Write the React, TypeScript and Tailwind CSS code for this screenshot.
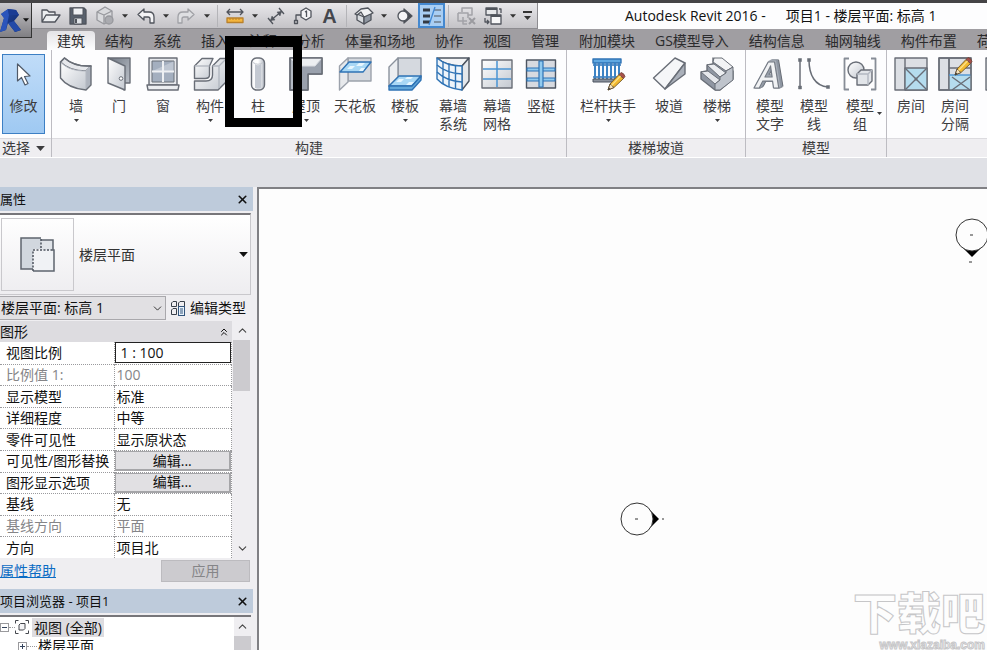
import { useState } from "react";
import type { ReactNode } from "react";
import { ChevronDown, ChevronUp, ChevronsUp, X } from "lucide-react";
import clsx from "clsx";

const EDGE = "#696e77";
const BLUE = "#2f73b5";

function Caret({ className }: { className?: string }) {
  return (
    <svg width="7" height="4" viewBox="0 0 7 4" className={className} aria-hidden="true">
      <path d="M0 0H7L3.5 4Z" fill="currentColor" />
    </svg>
  );
}

function Big({ children }: { children: ReactNode }) {
  return (
    <svg
      width="34"
      height="34"
      viewBox="0 0 34 34"
      fill="none"
      stroke={EDGE}
      strokeWidth="1.4"
      strokeLinejoin="round"
      className="shrink-0 overflow-visible"
      aria-hidden="true"
    >
      {children}
    </svg>
  );
}

function Small({ children }: { children: ReactNode }) {
  return (
    <svg
      width="20"
      height="20"
      viewBox="0 0 20 20"
      fill="none"
      stroke="#50545c"
      strokeWidth="1.3"
      strokeLinejoin="round"
      aria-hidden="true"
    >
      {children}
    </svg>
  );
}

function Gradients() {
  return (
    <svg width="0" height="0" className="absolute" aria-hidden="true">
      <defs>
        <linearGradient id="steel" x1="0" y1="0" x2="1" y2="1">
          <stop offset="0" stopColor="#ffffff" />
          <stop offset="1" stopColor="#c3c8d0" />
        </linearGradient>
        <linearGradient id="dark" x1="0" y1="0" x2="1" y2="1">
          <stop offset="0" stopColor="#6f7782" />
          <stop offset="1" stopColor="#c3c8d0" />
        </linearGradient>
        <linearGradient id="tube" x1="0" y1="0" x2="1" y2="0">
          <stop offset="0" stopColor="#f8f8fa" />
          <stop offset="0.5" stopColor="#ffffff" />
          <stop offset="1" stopColor="#b4bac4" />
        </linearGradient>
        <linearGradient id="logo" x1="0" y1="0" x2="1" y2="1">
          <stop offset="0" stopColor="#2149a8" />
          <stop offset="1" stopColor="#0d2460" />
        </linearGradient>
      </defs>
    </svg>
  );
}

function Pencil() {
  return (
    <>
      <path d="M17 33L19 27L28 17.500L32.500 21.500L23 30.500Z" fill="#f2b92f" stroke="#7b6030" strokeWidth="1" />
      <path d="M17 33L19 27L23 30.500Z" fill="#f6e3bd" stroke="#6a5840" strokeWidth="1" />
      <path d="M17 33L17.800 30.500L19.500 32Z" fill="#333" stroke="none" />
      <path d="M28 17.500L30 15.500Q33 16 34 19.500L32.500 21.500Z" fill="#a8504a" stroke="#6f4238" strokeWidth="0.800" />
      <path d="M20.500 28.500L29.500 19" stroke="#fbe08a" strokeWidth="1.200" />
    </>
  );
}

function RoomShape() {
  return (
    <>
      <rect x="1" y="1" width="32" height="32" fill="#dcdfe4" />
      <path d="M11 1V33" />
    </>
  );
}

const icons: Record<string, ReactNode> = {
  wall: (
    <Big>
      <path d="M1.500 5L5.500 1C12 7 22 9.500 32 9L27 14C17 14 8 12 1.500 5Z" fill="#e6e8ec" />
      <path d="M1.500 5C8 12 17 14 27 14V33C16 32 7 28.500 1.500 21Z" fill="url(#steel)" stroke="none" />
      <path d="M27 14L32 9V28L27 33Z" fill="#aeb4be" stroke="none" />
      <path d="M1.500 5C8 12 17 14 27 14M27 14V33M27 14L32 9" stroke="#b3b8c1" strokeWidth="1" />
      <path d="M1.500 5L5.500 1C12 7 22 9.500 32 9V28L27 33C16 32 7 28.500 1.500 21Z" />
    </Big>
  ),
  door: (
    <Big>
      <path d="M6 1H28V26H22V33Z" fill="url(#dark)" />
      <path d="M6 1L23 9V33L6 26Z" fill="url(#steel)" />
      <circle cx="19" cy="21.500" r="1.800" fill="#fff" strokeWidth="1" />
    </Big>
  ),
  window: (
    <Big>
      <rect x="3" y="1" width="28" height="27" fill="#e6e8ec" />
      <rect x="6" y="4" width="22" height="21" fill="#a4afbf" strokeWidth="1" />
      <path d="M6.500 14L27.500 4.500V14Z" fill="#bec6d2" stroke="none" />
      <path d="M17 4V25M6 14.500H28" stroke="#eef0f3" strokeWidth="2" />
      <path d="M1 28H33L32 33H2Z" fill="#eceef1" />
    </Big>
  ),
  component: (
    <Big>
      <path d="M1.500 9L9 1.500H20L16.500 9V18Q16.500 21.500 12 21.500H1.500Z" fill="url(#steel)" />
      <path d="M1.500 9H16.500" stroke="#b3b8c1" />
      <path d="M1.500 24H13Q19.500 24 19.500 18V9L27 1.500H33V25L25 33H1.500Z" fill="url(#steel)" />
      <path d="M19.500 9H26L33 2M26 9V31" stroke="#b3b8c1" />
    </Big>
  ),
  column: (
    <Big>
      <rect x="10.500" y="1" width="13" height="32" rx="5" fill="url(#tube)" />
      <path d="M14 7Q17 9.500 20 7V31Q17 32.500 14 31Z" fill="#c4c9d2" stroke="none" />
      <path d="M12 5.500Q17 9 22 5.500" stroke="#c2c6cd" strokeWidth="1" />
    </Big>
  ),
  roof: (
    <Big>
      <path d="M1 1H33V17H19V33H1Z" fill="#b4bac4" />
      <path d="M1 1L10 9H26L33 1Z" fill="#eceef1" stroke="none" />
      <path d="M10 9V33H18.500V16.500H32.500V1.500L26 9Z" fill="#9aa1ad" stroke="none" />
      <path d="M1 1L10 9H26L33 1M10 9V33" stroke="#d9dce1" strokeWidth="1" />
      <path d="M1 1H33V17H19V33H1Z" />
    </Big>
  ),
  ceiling: (
    <Big>
      <path d="M10 1H33V24H10Z" fill="#d5d9df" stroke="#9ca2ac" />
      <path d="M1.500 9L10 1V25L1.500 33Z" fill="#e7e9ec" stroke="#9ca2ac" />
      <path d="M2 15L11 5H33L25 15Z" fill="#a9d8f5" stroke={BLUE} />
      <path d="M9 12L12 9H17L14 12ZM18 9L21 6H27L24 9ZM21 14L23 11H27L25 14Z" fill="#e7f6fe" stroke="none" />
    </Big>
  ),
  floor: (
    <Big>
      <path d="M10 1H33V21H10Z" fill="#d5d9df" stroke="#8b929d" />
      <path d="M1 10L10 1V20L1 29Z" fill="#eceef1" stroke="#8b929d" />
      <path d="M1 29L11 19H33L24 29Z" fill="#a9d8f5" stroke={BLUE} />
      <path d="M1 29H24L33 19V23L24 33H1Z" fill="#62a8da" stroke={BLUE} />
      <path d="M8 25L11 22H16L13 25ZM17 22L19 20H25L23 22ZM18 28L21 25H26L23 28Z" fill="#e7f6fe" stroke="none" />
    </Big>
  ),
  curtainSystem: (
    <Big>
      <path d="M1 1H33L26 9Q10 9 1 1Z" fill="#f3f4f6" stroke="#4d5561" />
      <path d="M26 9L33 1V24L26 33Z" fill="#e4e7eb" stroke="#4d5561" />
      <path d="M1 1Q10 9 26 9V33Q9 31 1 22Z" fill="#edf4fa" stroke={BLUE} />
      <path d="M1 8Q10 16 26 17M1 15Q10 24 26 25M7 5V27M13 7.500V30M19.500 8.500V32" stroke={BLUE} />
    </Big>
  ),
  curtainGrid: (
    <Big>
      <rect x="2" y="3" width="30" height="28" fill="url(#steel)" />
      <path d="M17 4V30M3 12H31M3 22H31" stroke="#4a94d3" strokeWidth="1.500" />
    </Big>
  ),
  mullion: (
    <Big>
      <rect x="2.500" y="3" width="29" height="28" fill="#d7dae0" stroke="#4d5561" />
      <path d="M3 11H31V14H3ZM3 21H31V24H3Z" fill="#91caef" stroke={BLUE} strokeWidth="1.200" />
      <path d="M15 4H19V30H15Z" fill="#91caef" stroke={BLUE} strokeWidth="1.200" />
    </Big>
  ),
  railing: (
    <Big>
      <path d="M2 2H30V6H2Z" fill="#60a9e2" stroke={BLUE} />
      <path d="M2 8H30M2 20H30" stroke={BLUE} strokeWidth="1.500" />
      <path d="M4 6V22M8 6V22M12 6V22M16 6V22M20 6V22M24 6V22M28 6V22" stroke="#3d83c4" strokeWidth="2" />
      <path d="M2 22H24V25H2Z" fill="#89909b" stroke="#4d5561" strokeWidth="1" />
      <Pencil />
    </Big>
  ),
  ramp: (
    <Big>
      <path d="M1.500 21L23 1L33 6L13 32Z" fill="#f5f6f8" />
      <path d="M33 6V17L13 32Z" fill="#aab0ba" />
    </Big>
  ),
  stairs: (
    <Big>
      <path d="M13 1L33 14V22L20 33H15L1 22V15L7 14V8L13 7Z" fill="#9097a3" />
      <path d="M14 1H22L33 10L26 14L13 5Z" fill="#f2f3f5" strokeWidth="1" />
      <path d="M7 8L14 7L26 16L20 20Z" fill="#eceef1" strokeWidth="1" />
      <path d="M1 15L8 14L20 23L15 27Z" fill="#e6e8ec" strokeWidth="1" />
      <path d="M33 10V23L20 33H15V27L20 23V20L26 16V14Z" fill="#bfc4cc" strokeWidth="1" />
    </Big>
  ),
  modelText: (
    <Big>
      <text
        x="15"
        y="31"
        fill="#f1f2f4"
        stroke="#757b85"
        strokeWidth="1.200"
        fontFamily="Liberation Sans, sans-serif"
        fontStyle="italic"
        fontWeight="700"
        fontSize="37"
        textAnchor="middle"
        className="[filter:drop-shadow(1px_-1px_0_#aab0ba)_drop-shadow(2px_-1px_0_#8e96a2)_drop-shadow(1px_0_0_#696e77)]"
      >
        A
      </text>
    </Big>
  ),
  modelLine: (
    <Big>
      <path d="M3 3V31M12 3C12 18 18 29 31 30" strokeWidth="1.500" />
      <path d="M1.500 1.500H4.500V4.500H1.500ZM1.500 29H4.500V32H1.500ZM10.500 1.500H13.500V4.500H10.500ZM29.500 28.500H32.500V31.500H29.500Z" fill={EDGE} strokeWidth="0.500" />
    </Big>
  ),
  modelGroup: (
    <Big>
      <path d="M6 1.500H1.500V32.500H6M28 1.500H32.500V32.500H28" stroke="#878d97" strokeWidth="1.800" />
      <circle cx="13" cy="13" r="8" fill="url(#steel)" />
      <path d="M14 17L18 13H29V24L25 28H14Z" fill="#e2e5e9" />
      <path d="M14 17H25V28M25 17L29 13" stroke="#b3b8c1" />
    </Big>
  ),
  room: (
    <Big>
      <RoomShape />
      <path d="M11 11H33V33H11Z" fill="#b5dcee" />
      <path d="M11 11L33 33M33 11L11 33" />
      <circle cx="22" cy="22" r="1.500" fill={EDGE} stroke="none" />
    </Big>
  ),
  roomSeparator: (
    <Big>
      <RoomShape />
      <path d="M11 18H33V33H11Z" fill="#b5dcee" stroke="none" />
      <path d="M11 1V33M11 11H33" />
      <path d="M11 18H33" stroke="#4a94d3" />
      <path d="M14 20L32 33M32 20L14 33" />
      <rect x="1" y="1" width="32" height="32" />
      <g transform="translate(0 -15)">
        <Pencil />
      </g>
    </Big>
  ),
  tagRoom: (
    <Big>
      <rect x="1" y="1" width="32" height="32" fill="#dcdfe4" />
    </Big>
  ),
};

type Tool = { icon: string; label: string[]; width: string; menu?: boolean; sideMenu?: boolean };
type Panel = { title: string; className: string; tools: Tool[] };

const panels: Panel[] = [
  {
    title: "构建",
    className: "px-0.5",
    tools: [
      { icon: "wall", label: ["墙"], width: "w-11", menu: true },
      { icon: "door", label: ["门"], width: "w-[42px]" },
      { icon: "window", label: ["窗"], width: "w-[46px]" },
      { icon: "component", label: ["构件"], width: "w-12", menu: true },
      { icon: "column", label: ["柱"], width: "w-12" },
      { icon: "roof", label: ["屋顶"], width: "w-12", menu: true },
      { icon: "ceiling", label: ["天花板"], width: "w-[50px]" },
      { icon: "floor", label: ["楼板"], width: "w-[50px]", menu: true },
      { icon: "curtainSystem", label: ["幕墙", "系统"], width: "w-[46px]" },
      { icon: "curtainGrid", label: ["幕墙", "网格"], width: "w-[42px]" },
      { icon: "mullion", label: ["竖梃"], width: "w-[46px]" },
    ],
  },
  {
    title: "楼梯坡道",
    className: "px-1",
    tools: [
      { icon: "railing", label: ["栏杆扶手"], width: "w-[74px]", menu: true },
      { icon: "ramp", label: ["坡道"], width: "w-12" },
      { icon: "stairs", label: ["楼梯"], width: "w-12", menu: true },
    ],
  },
  {
    title: "模型",
    className: "px-0.5",
    tools: [
      { icon: "modelText", label: ["模型", "文字"], width: "w-11" },
      { icon: "modelLine", label: ["模型", "线"], width: "w-11" },
      { icon: "modelGroup", label: ["模型", "组"], width: "w-12", sideMenu: true },
    ],
  },
  {
    title: "",
    className: "px-0.5",
    tools: [
      { icon: "room", label: ["房间"], width: "w-11" },
      { icon: "roomSeparator", label: ["房间", "分隔"], width: "w-11" },
      { icon: "tagRoom", label: [], width: "w-[50px]" },
    ],
  },
];

const tabs = [
  "建筑", "结构", "系统", "插入", "注释", "分析", "体量和场地", "协作",
  "视图", "管理", "附加模块", "GS模型导入", "结构信息", "轴网轴线", "构件布置", "荷载",
];

function RevitLogo() {
  return (
    <svg width="22" height="25" viewBox="0 0 22 25" aria-hidden="true">
      <path d="M1 6L8 1L16 2L19 7L14 13L21 22L15 24L8 15L6 22L0 24L4 10Z" fill="url(#logo)" />
      <path d="M1 6L8 1L9 7L4 10ZM4 10L9 7L6 22L0 24Z" fill="#2c55bb" />
      <path d="M8 1L16 2L19 7L9 7Z" fill="#1a3c94" />
      <path d="M8 15L14 13L21 22L15 24Z" fill="#234aa8" />
    </svg>
  );
}

function QuickButton({ label, active, children }: { label: string; active?: boolean; children: ReactNode }) {
  return (
    <button
      aria-label={label}
      className={clsx(
        "flex h-[25px] w-[27px] shrink-0 items-center justify-center",
        active && "border-2 border-[#4488cf] bg-[#a9cef3]"
      )}
    >
      {children}
    </button>
  );
}

function QuickCaret({ label }: { label: string }) {
  return (
    <button aria-label={label} className="flex h-[25px] w-3.5 shrink-0 items-center justify-center text-[#333]">
      <Caret className="h-1 w-1.5" />
    </button>
  );
}

function Divider() {
  return <span className="mx-[3px] h-[22px] w-px shrink-0 bg-[#b4b4b8]" />;
}

function QuickAccess() {
  return (
    <div className="flex h-[26px] shrink-0 items-center border-r border-b border-[#8d8c90] bg-linear-to-b from-[#e9e8eb] to-[#c4c3c7] pr-[3px] pl-[5px]">
      <QuickButton label="打开">
        <Small>
          <path d="M1 16V4H6L8 6H14V9M1 16L5 9H19L14 16Z" fill="#eceef0" />
        </Small>
      </QuickButton>
      <QuickButton label="保存">
        <Small>
          <path d="M2 2H16L18 4V18H2Z" fill="#59616d" />
          <path d="M5 2H15V9H5Z" fill="#eff0f3" strokeWidth="1" />
          <path d="M6 12H14V18H6Z" fill="#dfe2e6" strokeWidth="1" />
          <path d="M8 13V17" strokeWidth="2" />
        </Small>
      </QuickButton>
      <QuickButton label="同步">
        <Small>
          <g stroke="#97989d">
            <path d="M2 6L10 1L17 5V14L9 18L2 14Z" fill="#d9dadd" />
            <path d="M2 6L9 9L17 5M9 9V18" />
            <circle cx="14" cy="14" r="4" fill="#aaabb0" />
          </g>
        </Small>
      </QuickButton>
      <QuickCaret label="同步选项" />
      <QuickButton label="放弃">
        <Small>
          <path d="M8 3L2 8.500L8 14V11H12Q14 11 14 13V17H18V11Q18 6 13 6H8Z" fill="#f4f4f6" />
        </Small>
      </QuickButton>
      <QuickCaret label="放弃列表" />
      <QuickButton label="重做">
        <Small>
          <path d="M11 3L17 8.500L11 14V11H7Q5 11 5 13V17H1V11Q1 6 6 6H11Z" fill="#dedfe2" stroke="#a0a1a6" />
        </Small>
      </QuickButton>
      <QuickCaret label="重做列表" />
      <Divider />
      <QuickButton label="测量">
        <Small>
          <path d="M2 6H18M5 3L2 6L5 9M15 3L18 6L15 9" />
          <path d="M2 12H18V16.500H2Z" fill="#f5b63d" stroke="#b9812c" />
          <path d="M5 12V14M8 12V14M11 12V14M14 12V14" stroke="#b9812c" strokeWidth="1" />
        </Small>
      </QuickButton>
      <QuickCaret label="测量选项" />
      <QuickButton label="对齐尺寸标注">
        <Small>
          <path d="M4 15L16 5M2 12L7 18M13 2L18 8" />
          <path d="M4.500 14.500L6 10L9 14ZM15.500 5.500L11 6L14 10Z" fill="#50545c" strokeWidth="0.500" />
        </Small>
      </QuickButton>
      <QuickButton label="按类别标记">
        <Small>
          <path d="M13 2L18 5V11L13 14L8 11V5Z" fill="#f4f4f6" />
          <path d="M12 6L13.500 5V11M8 9H3V14M1.500 14.500H4.500V17.500H1.500Z" />
        </Small>
      </QuickButton>
      <QuickButton label="文字">
        <span className="font-['Liberation_Sans',sans-serif] text-xl leading-none font-bold text-[#44474d]">A</span>
      </QuickButton>
      <Divider />
      <QuickButton label="默认三维视图">
        <Small>
          <path d="M3 8V14L10 18V11Z" fill="#d9dce0" />
          <path d="M10 11L17 7V14L10 18Z" fill="#8f96a1" />
          <path d="M1 8L7 3L14 2L19 7L10 11L7 6L3 9Z" fill="#f1f2f4" />
        </Small>
      </QuickButton>
      <QuickCaret label="三维视图选项" />
      <QuickButton label="剖面">
        <Small>
          <path d="M9 3L17 10L9 17Z" fill="#44474d" />
          <circle cx="8" cy="10" r="5" fill="#f4f4f6" />
        </Small>
      </QuickButton>
      <QuickButton label="细线" active>
        <Small>
          <path d="M1 4H8M1 10H8M1 16H8" stroke="#333a44" strokeWidth="3" />
          <path d="M12 4H19M12 10H19M12 16H19" strokeWidth="1.200" />
          <path d="M13 1L7 19" stroke="#3e87d4" />
        </Small>
      </QuickButton>
      <Divider />
      <QuickButton label="关闭隐藏窗口">
        <Small>
          <path d="M6 6V2H16V9H12M2 7H12V12M2 7V15H11M7 11V18H11" stroke="#a3a3a8" strokeWidth="1.500" />
          <path d="M13 12L19 18M19 12L13 18" stroke="#9b9ba0" strokeWidth="2" />
        </Small>
      </QuickButton>
      <QuickButton label="切换窗口">
        <Small>
          <path d="M3 2H14V9H3Z" fill="#e7e8ea" />
          <path d="M8 9H18V18H8Z" fill="#f7f7f8" />
          <path d="M3 3H14M8 10H18" strokeWidth="2.200" />
          <path d="M2 12V16H6M4 14L6 16L4 18M16 3H18V7" />
        </Small>
      </QuickButton>
      <QuickCaret label="切换窗口列表" />
      <button aria-label="自定义快速访问工具栏" className="flex h-[25px] w-3.5 flex-col items-center justify-center gap-[3px] text-[#333]">
        <span className="h-[2px] w-[9px] bg-[#333]" />
        <Caret />
      </button>
    </div>
  );
}

function RibbonButton({ tool }: { tool: Tool }) {
  return (
    <button className={clsx("relative flex shrink-0 flex-col items-center pt-[7px] whitespace-nowrap", tool.width)}>
      {icons[tool.icon]}
      <span className="mt-1.5 leading-[18px]">
        {tool.label.map((line) => (
          <span key={line} className="block">{line}</span>
        ))}
      </span>
      {tool.menu && <Caret className="mt-1 h-[3px] w-[5px]" />}
      {tool.sideMenu && <Caret className="absolute right-0.5 bottom-[18px] h-[3px] w-[5px]" />}
    </button>
  );
}

function Ribbon() {
  return (
    <div className="flex h-[108px] shrink-0 overflow-hidden border-b border-white bg-[#fdfdfe] text-[#3c3c3e]">
      <div className="flex w-[51px] shrink-0 flex-col">
        <div className="flex-1 pt-1 pl-0.5">
          <button className="flex h-20 w-[43px] flex-col items-center border border-[#3c7fc4] bg-linear-to-b from-[#c0dcf8] to-[#9fc9f2] pt-2">
            <svg width="16" height="24" viewBox="0 0 16 24" aria-hidden="true">
              <path d="M1.500 1V18L5.500 14.500L9 22L12 20.500L8.500 13.500L14 13Z" fill="#fff" stroke="#505a68" strokeWidth="1.200" strokeLinejoin="round" />
            </svg>
            <span className="mt-2.5 leading-[18px]">修改</span>
          </button>
        </div>
        <button className="flex h-[19px] items-center gap-1.5 border-t border-[#dcdbdf] bg-[#efeef1] pl-0.5">
          选择
          <Caret className="h-[5px] w-[9px]" />
        </button>
      </div>
      {panels.map((panel, i) => (
        <section
          key={i}
          className={clsx("flex shrink-0 flex-col border-l border-[#bdbcc2]", i === panels.length - 1 && "grow")}
        >
          <div className={clsx("flex flex-1 items-start", panel.className)}>
            {panel.tools.map((tool) => (
              <RibbonButton key={tool.icon} tool={tool} />
            ))}
          </div>
          <h2 className="h-[19px] border-t border-[#dcdbdf] bg-[#efeef1] text-center leading-[18px]">{panel.title}</h2>
        </section>
      ))}
    </div>
  );
}

type Row = { name: string; value: string; kind?: "input" | "button"; disabled?: boolean };

const rows: Row[] = [
  { name: "视图比例", value: "1 : 100", kind: "input" },
  { name: "比例值 1:", value: "100", disabled: true },
  { name: "显示模型", value: "标准" },
  { name: "详细程度", value: "中等" },
  { name: "零件可见性", value: "显示原状态" },
  { name: "可见性/图形替换", value: "编辑...", kind: "button" },
  { name: "图形显示选项", value: "编辑...", kind: "button" },
  { name: "基线", value: "无" },
  { name: "基线方向", value: "平面", disabled: true },
  { name: "方向", value: "项目北" },
];

function PaletteTitle({ children }: { children: ReactNode }) {
  return (
    <div className="flex h-6 shrink-0 items-center justify-between bg-[#becbdb] pr-1 text-[13px]">
      <h2>{children}</h2>
      <button aria-label="关闭">
        <X size={13} strokeWidth={3} />
      </button>
    </div>
  );
}

function PropertyValue({ row, scale, onScale }: { row: Row; scale: string; onScale: (v: string) => void }) {
  if (row.kind === "input") {
    return (
      <input
        aria-label={row.name}
        value={scale}
        onChange={(e) => onScale(e.target.value)}
        className="block h-[21px] w-full border border-[#222] bg-white pl-[5px] outline-none"
      />
    );
  }
  if (row.kind === "button") {
    return (
      <button
        aria-label={`${row.name} ${row.value}`}
        className="block h-5 w-full border border-r-2 border-b-2 border-[#a5a5a8] bg-[#e1e0e3] leading-none"
      >
        {row.value}
      </button>
    );
  }
  return <span className="pl-0.5">{row.value}</span>;
}

function PropertiesPalette() {
  const [scale, setScale] = useState("1 : 100");

  return (
    <section className="flex shrink-0 flex-col">
      <PaletteTitle>属性</PaletteTitle>
      <button className="mt-0.5 mr-0.5 flex h-[82px] items-center border-t-2 border-r border-b border-[#c9c8cc] border-t-[#77767a] bg-linear-to-b from-white to-[#eeedf0] pr-0.5 pl-px">
        <span className="flex h-[73px] w-[73px] items-center justify-center border border-[#c9c8cc]">
          <svg width="36" height="36" viewBox="0 0 36 36" aria-hidden="true">
            <path d="M1 1H21V12H13V32H1Z" fill="#d1d7de" />
            <path d="M21 3H33V13H21Z" fill="#dfe3e8" />
            <path d="M13 13H34V34H13Z" fill="#f0f2f5" />
            <path d="M13 32H1V1H21M21 3H33V13H34V34H13" fill="none" stroke="#5d646e" strokeWidth="1.500" />
            <path d="M21 2V13M13 34V13H34" fill="none" stroke="#4b525c" strokeWidth="1.500" strokeDasharray="2 1.500" />
          </svg>
        </span>
        <span className="ml-[5px] flex-1 text-left text-[#333]">楼层平面</span>
        <Caret className="h-[5px] w-[9px]" />
      </button>

      <div className="mt-px flex h-6 items-center">
        <div className="relative w-[166px]">
          <select
            aria-label="实例"
            className="block h-6 w-full appearance-none border border-l-0 border-[#a9a8ac] bg-[#e1e0e3] pl-px"
          >
            <option>楼层平面: 标高 1</option>
          </select>
          <ChevronDown size={13} strokeWidth={1.5} className="pointer-events-none absolute top-1.5 right-0.5" />
        </div>
        <button className="flex items-center gap-1 pl-1 whitespace-nowrap">
          <svg width="16" height="16" viewBox="0 0 16 16" fill="none" stroke="#39404a" aria-hidden="true">
            <path d="M1.500 3L3 1.500H6.500V6.500H1.500ZM8.500 3L10 1.500H14.500V6.500H8.500ZM1.500 10L3 8.500H6.500V14.500H1.500Z" />
            <rect x="8.500" y="6.500" width="6" height="9" fill="#e8f2fb" stroke="#33557c" />
            <path d="M10 9H13M10 11H13M10 13H13" stroke="#33557c" />
          </svg>
          编辑类型
        </button>
      </div>

      <div className="mt-px flex">
        <div className="w-[232px] bg-white">
          <button className="flex h-[21px] w-full items-center justify-between bg-[#dddce0] pr-0.5">
            图形
            <ChevronsUp size={12} strokeWidth={2} />
          </button>
          <table className="h-[216px] w-full table-fixed border-collapse">
            <tbody>
              {rows.map((row) => (
                <tr key={row.name} className={clsx("border-b border-dotted border-[#9a9a9d] last:border-b-0", row.disabled && "text-[#858588]")}>
                  <th scope="row" className="w-[114px] p-0 pl-1.5 text-left leading-5 font-normal whitespace-nowrap">
                    {row.name}
                  </th>
                  <td className="border-x border-dotted border-[#9a9a9d] p-0 leading-5">
                    <PropertyValue row={row} scale={scale} onScale={setScale} />
                  </td>
                </tr>
              ))}
            </tbody>
          </table>
        </div>
        <div className="flex flex-1 flex-col items-center text-[#444]">
          <button aria-label="向上滚动" className="flex h-[19px] items-center">
            <ChevronUp size={13} strokeWidth={2} />
          </button>
          <div className="mr-0.5 h-[51px] w-[17px] bg-[#cccbcf]" />
          <button aria-label="向下滚动" className="mt-auto flex h-[19px] items-center">
            <ChevronDown size={13} strokeWidth={2} />
          </button>
        </div>
      </div>

      <div className="flex h-[31px] items-start justify-between pt-0.5 pr-[3px]">
        <a href="#help" className="leading-[22px] text-[#0c6cc4] underline">属性帮助</a>
        <button className="h-[22px] w-[89px] border border-[#bcbbbf] bg-[#cccbcf] leading-5 text-[#858588]" disabled>
          应用
        </button>
      </div>
    </section>
  );
}

function TreeToggle({ open }: { open?: boolean }) {
  return (
    <svg width="9" height="9" viewBox="0 0 9 9" fill="none" stroke="#66666a" className="shrink-0" aria-hidden="true">
      <rect x="0.500" y="0.500" width="8" height="8" fill="#fff" stroke="#9a9a9d" />
      <path d={open ? "M2 4.500H7" : "M2 4.500H7M4.500 2V7"} stroke="#33435c" />
    </svg>
  );
}

function ProjectBrowser() {
  return (
    <section className="flex min-h-0 flex-1 flex-col overflow-hidden">
      <PaletteTitle>项目浏览器 - 项目1</PaletteTitle>
      <div className="mt-0.5 mr-0.5 flex flex-1 border-t-2 border-[#77767a] bg-white">
        <ul className="flex-1 whitespace-nowrap">
          <li>
            <div className="flex h-5 items-center">
              <TreeToggle open />
              <span className="w-1.5 border-t border-dotted border-[#9a9a9d]" />
              <svg width="14" height="14" viewBox="0 0 14 14" fill="none" stroke="#44474d" aria-hidden="true">
                <path d="M3.500 0.500H0.500V3.500M10.500 0.500H13.500V3.500M0.500 10.500V13.500H3.500M13.500 10.500V13.500H10.500" />
                <path d="M4 5L5.500 3.500H10V8.500L8.500 10H4Z" fill="#f4f4f6" />
              </svg>
              <span className="ml-[3px] bg-[#dddce0] px-0.5 leading-[19px]">视图 (全部)</span>
            </div>
            <ul className="pl-[18px]">
              <li className="flex h-[18px] items-center">
                <TreeToggle />
                <span className="w-2.5 border-t border-dotted border-[#9a9a9d]" />
                <span className="ml-px leading-[18px]">楼层平面</span>
              </li>
            </ul>
          </li>
        </ul>
        <div className="flex w-[17px] flex-col items-center bg-[#efeef1] text-[#444]">
          <button aria-label="向上滚动" className="flex h-[19px] items-center">
            <ChevronUp size={13} strokeWidth={2} />
          </button>
          <div className="w-full flex-1 bg-[#cccbcf]" />
        </div>
      </div>
    </section>
  );
}

function DrawingArea() {
  return (
    <main className="relative min-w-0 flex-1 overflow-hidden border-t-2 border-l-2 border-[#808084] bg-[#fdfdfd]">
      <svg width="46" height="36" viewBox="0 0 46 36" className="absolute top-[312px] left-[360px]" aria-hidden="true">
        <path d="M29 7L40 18L29 29Z" fill="#000" />
        <circle cx="18" cy="18" r="16" fill="#fdfdfd" stroke="#333" />
        <path d="M16 18H19M43 18H45" stroke="#333" />
      </svg>
      <svg width="36" height="46" viewBox="0 0 36 46" className="absolute top-7 -right-[3px]" aria-hidden="true">
        <path d="M7 29L18 40L29 29Z" fill="#000" />
        <circle cx="18" cy="18" r="16" fill="#fdfdfd" stroke="#333" />
        <path d="M16 18H19M15 45H18" stroke="#333" />
      </svg>
      <div className="absolute right-0.5 -bottom-0.5 flex flex-col items-end font-['Liberation_Sans','Noto_Sans_CJK_SC',sans-serif] text-[#fdfdfd]">
        <span className="text-[44px] leading-[46px] font-black [-webkit-text-stroke:1px_#c6c6c8]">下载吧</span>
        <span className="text-xs leading-[14px] font-bold [-webkit-text-stroke:1px_#c6c6c8]">www.xiazaiba.com</span>
      </div>
    </main>
  );
}

export default function App() {
  const [activeTab, setActiveTab] = useState("建筑");

  return (
    <div className="relative flex h-screen flex-col overflow-hidden bg-[#e0e1e6] font-['Open_Sans','Noto_Sans_CJK_SC',sans-serif] text-sm text-[#111]">
      <Gradients />
      <div className="h-[3px] shrink-0 bg-[#454446]" />
      <header className="relative shrink-0">
        <div className="flex h-[26px] bg-[#fdfdfe] pl-8">
          <QuickAccess />
          <h1 className="ml-[87px] flex items-center gap-5 text-sm whitespace-nowrap">
            <span>Autodesk Revit 2016 -</span>
            <span>项目1 - 楼层平面: 标高 1</span>
          </h1>
        </div>
        <nav className="flex h-[21px] items-end overflow-hidden bg-[#a09ea2] pl-[47px] text-[#2b2b2d]">
          {tabs.map((tab) => (
            <button
              key={tab}
              onClick={() => setActiveTab(tab)}
              className={clsx(
                "h-[19px] shrink-0 rounded-t-sm px-2.5 leading-[19px]",
                tab === activeTab && "bg-linear-to-b from-[#e4e3e6] to-[#fdfdfe]"
              )}
            >
              {tab}
            </button>
          ))}
        </nav>
        <button
          aria-label="应用程序菜单"
          className="absolute top-0 left-0 flex h-[35px] w-8 items-center justify-between border-r border-b border-[#333] bg-linear-to-b from-[#c9c8cc] to-[#807f83] pr-0.5"
        >
          <RevitLogo />
          <Caret className="h-1 w-1.5 shrink-0" />
        </button>
      </header>

      <Ribbon />

      <div className="h-[29px] shrink-0" />

      <div className="flex min-h-0 flex-1">
        <aside className="flex w-[253px] shrink-0 flex-col bg-[#efeef1]">
          <PropertiesPalette />
          <ProjectBrowser />
        </aside>
        <div className="w-1 shrink-0 bg-[#efeef1]" />
        <DrawingArea />
      </div>

      <div className="pointer-events-none absolute top-9 left-[225px] h-[91px] w-[77px] border-[9px] border-t-[11px] border-black" />
    </div>
  );
}
